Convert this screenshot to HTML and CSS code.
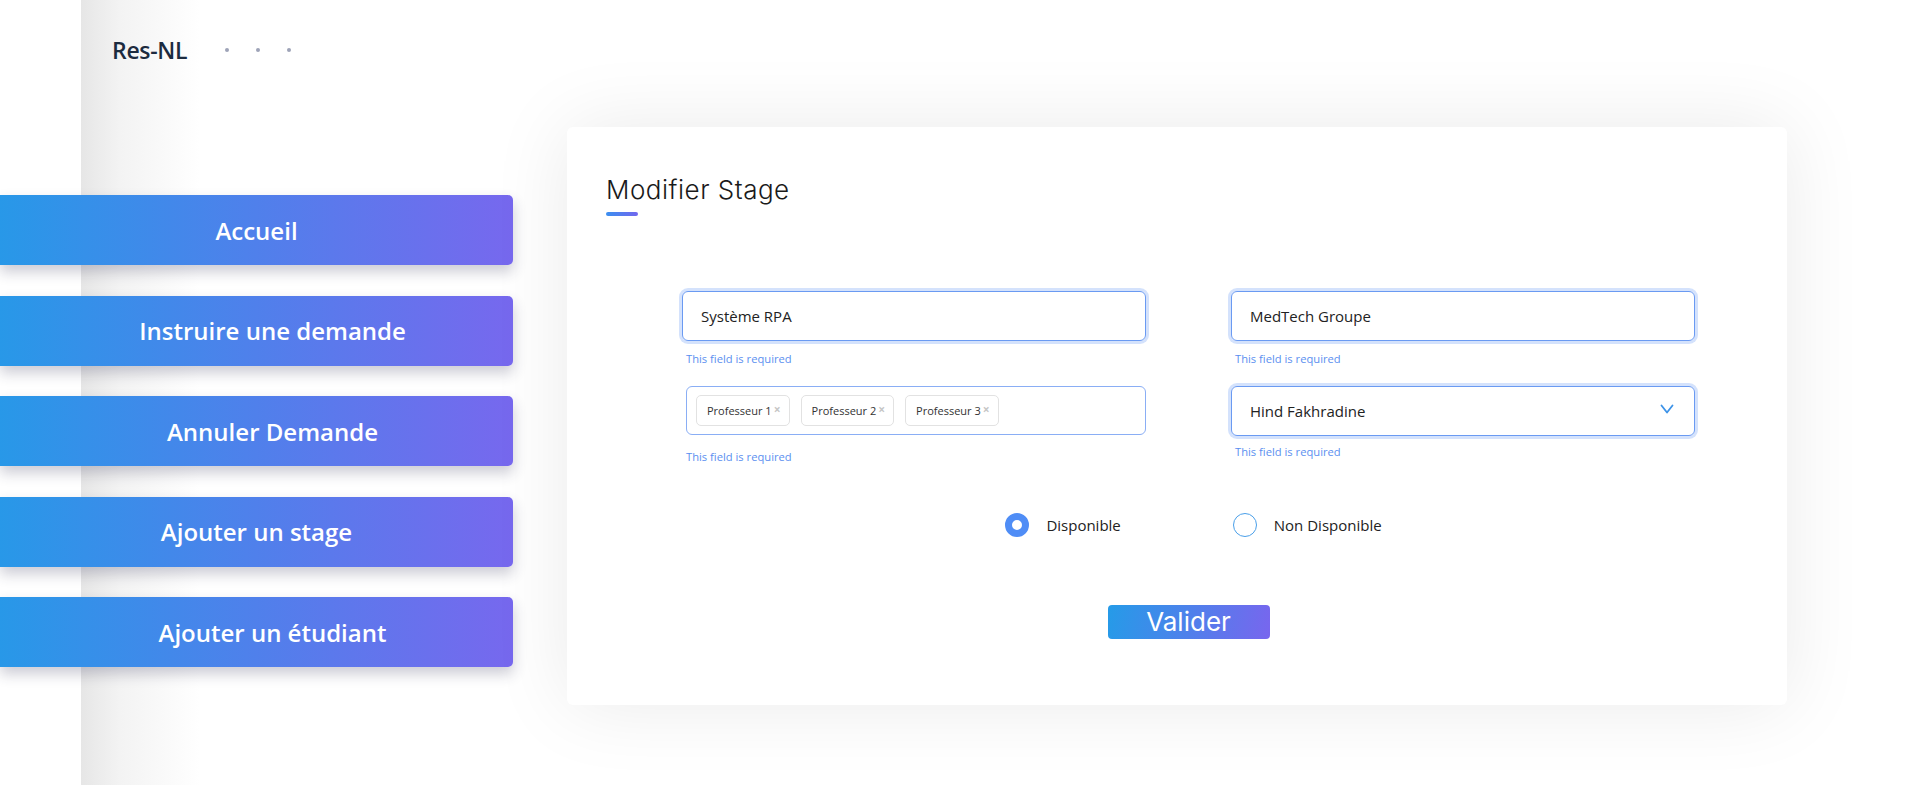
FILE: index.html
```html
<!DOCTYPE html>
<html lang="fr">
<head>
<meta charset="utf-8">
<title>Modifier Stage</title>
<link rel="stylesheet" href="styles.css">
</head>
<body>
<div class="app">
  <aside class="sidebar">
    <div class="brand">
      <span class="brand-name">Res-NL</span>
      <span class="dots"><i></i><i></i><i></i></span>
    </div>
    <nav class="menu">
      <a class="menu-item">Accueil</a>
      <a class="menu-item shift">Instruire une demande</a>
      <a class="menu-item shift">Annuler Demande</a>
      <a class="menu-item">Ajouter un stage</a>
      <a class="menu-item shift">Ajouter un étudiant</a>
    </nav>
  </aside>
  <main class="main">
    <section class="card">
      <h1 class="card-title">Modifier Stage</h1>
      <div class="title-bar"></div>
      <form class="form">
        <div class="grid">
          <div class="field">
            <div class="control focused">Système RPA</div>
            <div class="error">This field is required</div>
          </div>
          <div class="field">
            <div class="control focused">MedTech Groupe</div>
            <div class="error">This field is required</div>
          </div>
          <div class="field">
            <div class="tags">
              <span class="tag">Professeur 1<b class="x">×</b></span>
              <span class="tag">Professeur 2<b class="x">×</b></span>
              <span class="tag">Professeur 3<b class="x">×</b></span>
            </div>
            <div class="error error-loose">This field is required</div>
          </div>
          <div class="field">
            <div class="control focused select">
              <span>Hind Fakhradine</span>
              <svg class="chev" width="14" height="11" viewBox="0 0 14 11"><path d="M1.5 1.5 L7 8.5 L12.5 1.5" fill="none" stroke="#3d93e8" stroke-width="1.8" stroke-linecap="round" stroke-linejoin="round"/></svg>
            </div>
            <div class="error error-tight">This field is required</div>
          </div>
        </div>
        <div class="radios">
          <label class="radio"><span class="dot checked"></span><span>Disponible</span></label>
          <label class="radio"><span class="dot"></span><span>Non Disponible</span></label>
        </div>
        <div class="actions">
          <button type="button" class="btn">Valider</button>
        </div>
      </form>
    </section>
  </main>
</div>
</body>
</html>
```
FILE: styles.css
```css
html, body {
  margin: 0;
  padding: 0;
}
body {
  height: 785px;
  overflow: hidden;
  font-family: "Open Sans", "Noto Sans", sans-serif;
  background: linear-gradient(to right, #fff 0, #fff 81px, #e6e6e6 81px, #f3f3f3 120px, #fff 200px);
}
.app {
  display: flex;
  min-height: 785px;
}
.sidebar {
  width: 567px;
  flex: none;
}
.brand {
  display: flex;
  align-items: center;
  height: 24px;
  margin-top: 38px;
  padding-left: 112px;
}
.brand-name {
  font-size: 23px;
  font-weight: 600;
  color: #1c2b3f;
  letter-spacing: -0.3px;
}
.dots {
  display: flex;
  gap: 27px;
  margin-left: 38px;
}
.dots i {
  display: block;
  width: 4px;
  height: 4px;
  border-radius: 50%;
  background: #9ea3b8;
}
.menu {
  display: flex;
  flex-direction: column;
  gap: 30.5px;
  margin-top: 133px;
}
.menu-item {
  width: 513px;
  height: 70px;
  box-sizing: border-box;
  display: flex;
  align-items: center;
  justify-content: center;
  color: #fff;
  font-size: 24px;
  font-weight: 600;
  background: linear-gradient(to right, #2898e8, #7768ee);
  border-radius: 0 5px 5px 0;
  box-shadow: 0 7px 14px rgba(40, 40, 80, 0.24);
}
.menu-item.shift {
  padding-left: 32px;
}
.main {
  flex: 1;
  padding-top: 127px;
}
.card {
  width: 1220px;
  height: 578px;
  box-sizing: border-box;
  background: #fff;
  border-radius: 6px;
  box-shadow: 0 0 80px rgba(0, 0, 0, 0.085);
  padding: 47px 92px 0 39px;
}
.card-title {
  margin: 0;
  font-family: Inter, sans-serif;
  font-weight: 300;
  font-size: 26px;
  line-height: 32px;
  letter-spacing: 0.5px;
  color: #1a1a1a;
}
.title-bar {
  width: 32px;
  height: 4px;
  border-radius: 2px;
  margin-top: 6px;
  background: linear-gradient(to right, #3a8ff0, #7267ee);
}
.form {
  margin-top: 75px;
  margin-left: 76px;
}
.grid {
  display: grid;
  grid-template-columns: 464px 464px;
  column-gap: 85px;
  row-gap: 20px;
}
.control {
  height: 50px;
  box-sizing: border-box;
  border: 1px solid #6a9af2;
  border-radius: 6px;
  padding: 0 18px;
  display: flex;
  align-items: center;
  font-size: 15px;
  color: #222;
}
.control.focused {
  box-shadow: 0 0 0 3px rgba(100, 150, 245, 0.28);
}
.select {
  justify-content: space-between;
  padding-right: 20px;
}
.chev {
  display: block;
  margin-top: -3px;
}
.error {
  font-size: 11.2px;
  line-height: 14px;
  color: #5b8ff0;
  margin-top: 11px;
  padding-left: 4px;
}
.error-tight {
  margin-top: 9px;
}
.error-loose {
  margin-top: 15px;
}
.tags {
  margin-left: 4px;
  height: 49px;
  box-sizing: border-box;
  border: 1px solid #8aaef5;
  border-radius: 6px;
  padding: 0 9px;
  display: flex;
  align-items: center;
  gap: 11px;
}
.tag {
  height: 31px;
  box-sizing: border-box;
  border: 1px solid #e2e2e2;
  border-radius: 5px;
  padding: 0 8px 0 10px;
  display: flex;
  align-items: center;
  font-size: 11px;
  color: #333;
}
.x {
  color: #c6c6c6;
  font-size: 12px;
  font-weight: 700;
  margin-left: 2px;
  margin-top: -3px;
}
.radios {
  display: flex;
  justify-content: center;
  gap: 112px;
  margin-top: 49px;
  padding-left: 10px;
}
.radio {
  display: flex;
  align-items: center;
  gap: 17px;
  font-size: 15px;
  color: #222;
}
.dot {
  width: 24px;
  height: 24px;
  box-sizing: border-box;
  border-radius: 50%;
  border: 1px solid #4a9fe9;
}
.dot.checked {
  border: 7px solid #4f8df6;
}
.actions {
  display: flex;
  justify-content: center;
  margin-top: 68px;
}
.btn {
  width: 162px;
  height: 34px;
  border: 0;
  border-radius: 4px;
  background: linear-gradient(100deg, #259be8, #7866ee);
  color: #fff;
  font-family: Inter, sans-serif;
  font-size: 26px;
  font-weight: 400;
  padding: 0;
  line-height: 34px;
}
```
